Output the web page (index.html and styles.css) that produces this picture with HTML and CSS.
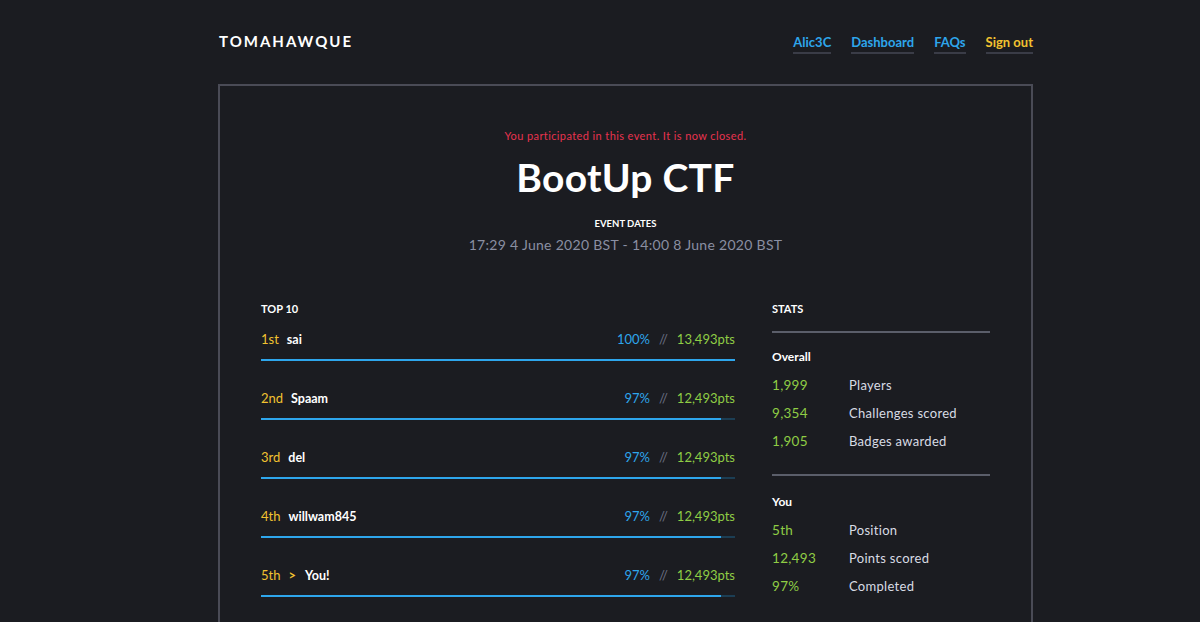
FILE: index.html
```html
<!DOCTYPE html>
<html>
<head>
<meta charset="utf-8">
<link rel="stylesheet" href="styles.css">
</head>
<body>
<div class="page">
  <header class="top">
    <div class="logo">TOMAHAWQUE</div>
    <nav class="nav">
      <a class="link">Alic3C</a>
      <a class="link">Dashboard</a>
      <a class="link">FAQs</a>
      <a class="link signout">Sign out</a>
    </nav>
  </header>
  <main class="card">
    <p class="notice">You participated in this event. It is now closed.</p>
    <h1 class="title">BootUp CTF</h1>
    <div class="dates-label">EVENT DATES</div>
    <div class="dates">17:29 4 June 2020 BST - 14:00 8 June 2020 BST</div>
    <div class="cols">
      <section class="board">
        <h2 class="heading">TOP 10</h2>
        <div class="row">
          <div class="row-line"><span class="pos">1st</span><span class="name">sai</span><span class="spacer"></span><span class="pct">100%</span><span class="sep">//</span><span class="pts">13,493pts</span></div>
          <div class="bar"><div class="fill" style="width:100%"></div></div>
        </div>
        <div class="row">
          <div class="row-line"><span class="pos">2nd</span><span class="name">Spaam</span><span class="spacer"></span><span class="pct">97%</span><span class="sep">//</span><span class="pts">12,493pts</span></div>
          <div class="bar"><div class="fill" style="width:97%"></div></div>
        </div>
        <div class="row">
          <div class="row-line"><span class="pos">3rd</span><span class="name">del</span><span class="spacer"></span><span class="pct">97%</span><span class="sep">//</span><span class="pts">12,493pts</span></div>
          <div class="bar"><div class="fill" style="width:97%"></div></div>
        </div>
        <div class="row">
          <div class="row-line"><span class="pos">4th</span><span class="name">willwam845</span><span class="spacer"></span><span class="pct">97%</span><span class="sep">//</span><span class="pts">12,493pts</span></div>
          <div class="bar"><div class="fill" style="width:97%"></div></div>
        </div>
        <div class="row">
          <div class="row-line"><span class="pos">5th</span><span class="arrow">&gt;</span><span class="name">You!</span><span class="spacer"></span><span class="pct">97%</span><span class="sep">//</span><span class="pts">12,493pts</span></div>
          <div class="bar"><div class="fill" style="width:97%"></div></div>
        </div>
      </section>
      <aside class="stats">
        <h2 class="heading stats-heading">STATS</h2>
        <div class="group">
          <div class="group-title">Overall</div>
          <div class="stat"><span class="num">1,999</span><span class="lbl">Players</span></div>
          <div class="stat"><span class="num">9,354</span><span class="lbl">Challenges scored</span></div>
          <div class="stat"><span class="num">1,905</span><span class="lbl">Badges awarded</span></div>
        </div>
        <div class="group">
          <div class="group-title">You</div>
          <div class="stat"><span class="num">5th</span><span class="lbl">Position</span></div>
          <div class="stat"><span class="num">12,493</span><span class="lbl">Points scored</span></div>
          <div class="stat"><span class="num">97%</span><span class="lbl">Completed</span></div>
        </div>
      </aside>
    </div>
  </main>
</div>
</body>
</html>
```

FILE: styles.css
```css
* { box-sizing: border-box; }
html, body {
  margin: 0;
  padding: 0;
  background: #1b1c21;
  color: #ffffff;
  font-family: Lato, "Noto Sans", sans-serif;
}
.page {
  width: 815px;
  margin-left: 218px;
}
.top {
  display: flex;
  align-items: center;
  justify-content: space-between;
  height: 84px;
  padding-bottom: 3px;
}
.logo {
  font-size: 15px;
  font-weight: 700;
  letter-spacing: 2px;
  color: #ffffff;
  padding-left: 1px;
}
.nav {
  display: flex;
  gap: 20px;
  margin-top: 6px;
}
.link {
  font-size: 13px;
  font-weight: 700;
  color: #2ea6ec;
  padding-bottom: 2px;
  border-bottom: 2px solid #3a3c47;
  line-height: 16px;
}
.signout { color: #f2c230; }
.card {
  border: 2px solid #4a4b56;
  padding: 0 41px 40px 41px;
  min-height: 560px;
}
.notice {
  margin: 43px 0 0 0;
  text-align: center;
  font-size: 11px;
  letter-spacing: 0.4px;
  color: #e8334f;
  line-height: 14px;
}
.title {
  margin: 10px 0 0 0;
  text-align: center;
  font-size: 39px;
  font-weight: 700;
  line-height: 48px;
  letter-spacing: 0.3px;
}
.dates-label {
  margin-top: 17px;
  text-align: center;
  font-size: 9.5px;
  font-weight: 700;
  line-height: 12px;
}
.dates {
  margin-top: 6px;
  text-align: center;
  font-size: 14px;
  color: #8a8fa2;
  letter-spacing: 0.3px;
  line-height: 18px;
}
.cols {
  display: flex;
  gap: 37px;
  margin-top: 48px;
}
.board { width: 474px; }
.stats { width: 218px; }
.heading {
  margin: 0;
  font-size: 11px;
  font-weight: 700;
  line-height: 14px;
}
.row {
  margin-top: 15px;
  padding-bottom: 29px;
}
.row + .row { margin-top: 0; }
.row-line {
  display: flex;
  align-items: baseline;
  font-size: 13px;
  line-height: 16px;
}
.pos { color: #f2c230; margin-right: 8px; }
.arrow { color: #f2c230; margin-right: 9px; font-weight: 700; }
.name { color: #ffffff; font-weight: 700; font-size: 12.5px; }
.spacer { flex: 1; }
.pct { color: #2ea6ec; }
.sep { color: #6d7185; margin: 0 9px; }
.pts { color: #8fcd45; }
.bar {
  margin-top: 11px;
  height: 2px;
  background: #1c3e54;
}
.fill {
  height: 2px;
  background: #2ea6ec;
}
.stats-heading {
  padding-bottom: 15px;
  border-bottom: 2px solid #5b5e6a;
}
.group {
  padding: 16px 0 25px 0;
}
.group + .group { border-top: 2px solid #5b5e6a; padding-top: 18px; }
.group-title {
  font-size: 12px;
  font-weight: 700;
  line-height: 16px;
  margin-bottom: 5px;
}
.stat {
  display: flex;
  align-items: baseline;
  line-height: 16px;
  margin-top: 12px;
}
.stat:first-of-type { margin-top: 0; }
.num { width: 77px; color: #8fcd45; font-size: 13.5px; letter-spacing: 0.3px; }
.lbl { color: #d8dbe4; letter-spacing: 0.3px; font-size: 13px; }
```
